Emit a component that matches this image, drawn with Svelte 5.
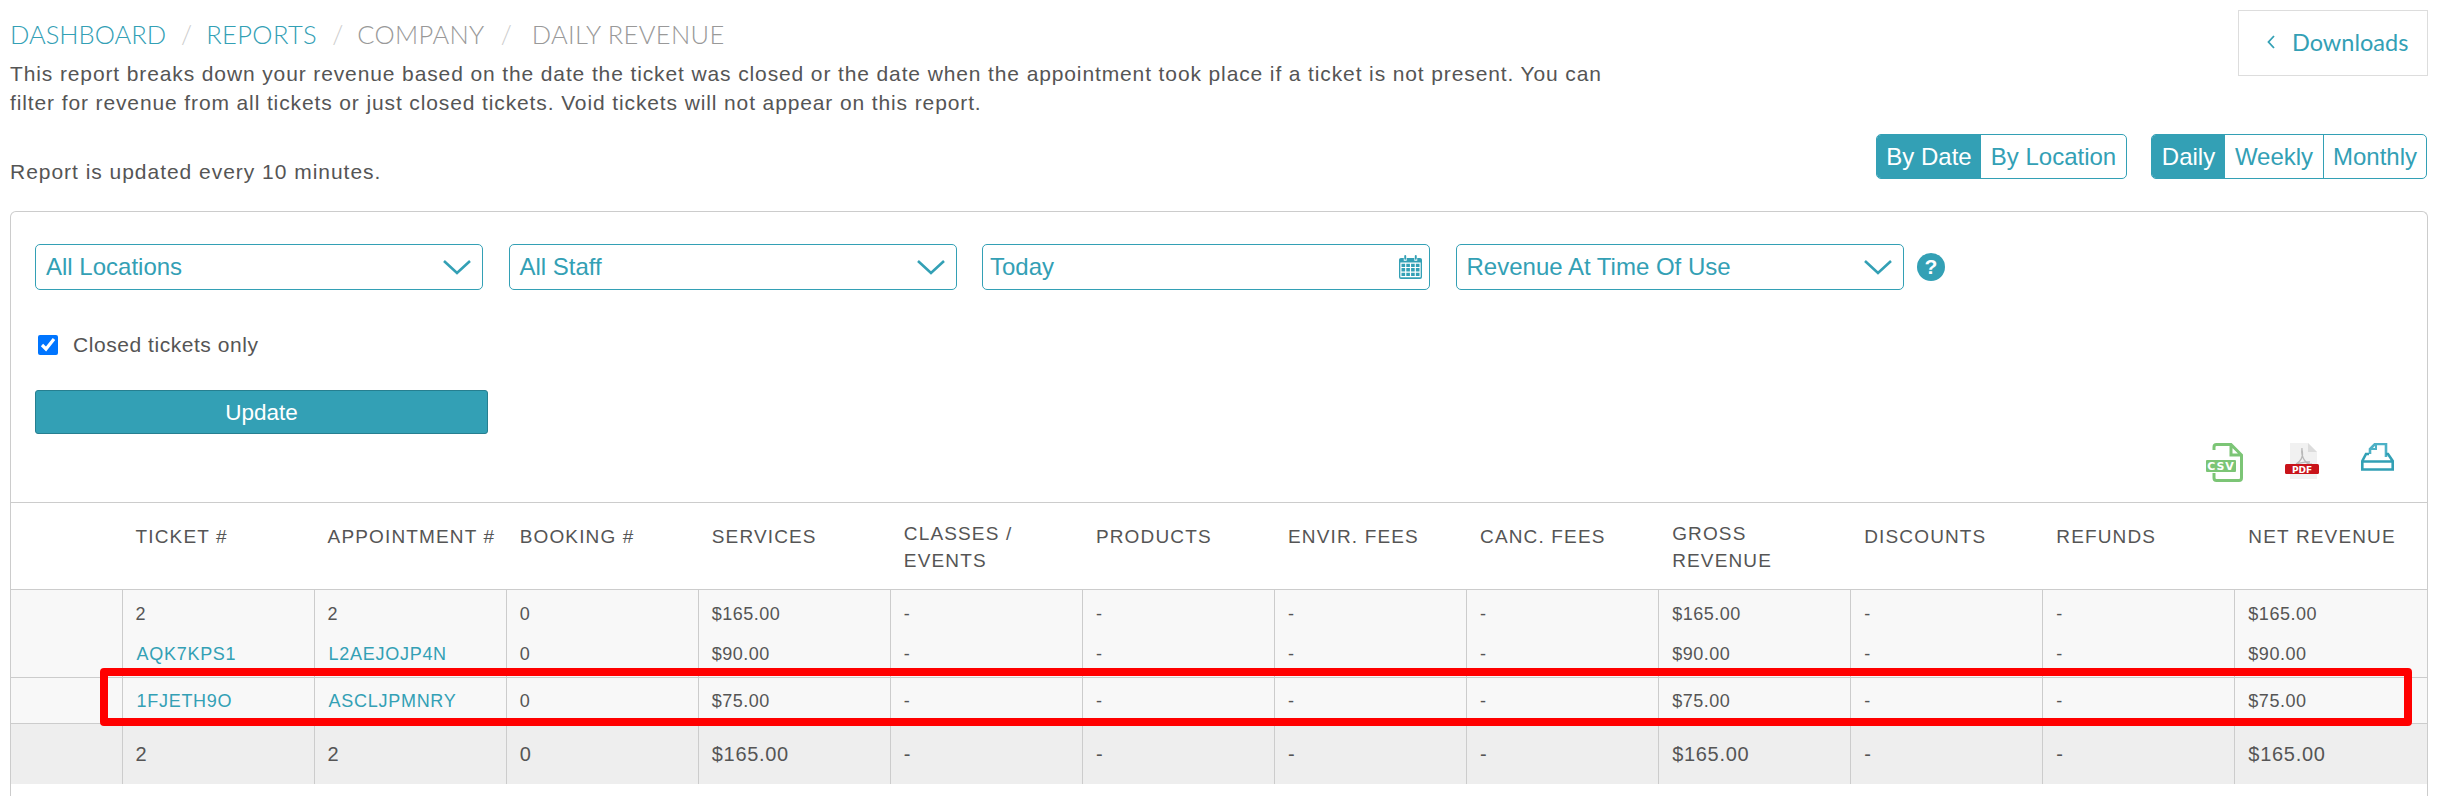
<script>
  const heads = [['TICKET #'],['APPOINTMENT #'],['BOOKING #'],['SERVICES'],['CLASSES /','EVENTS'],['PRODUCTS'],['ENVIR. FEES'],['CANC. FEES'],['GROSS','REVENUE'],['DISCOUNTS'],['REFUNDS'],['NET REVENUE']];
  const rows = [
    { cls: 'r1', link: false, cells: ['2','2','0','$165.00','-','-','-','-','$165.00','-','-','$165.00'] },
    { cls: 'r2', link: true, cells: ['AQK7KPS1','L2AEJOJP4N','0','$90.00','-','-','-','-','$90.00','-','-','$90.00'] },
    { cls: 'r3', link: true, cells: ['1FJETH9O','ASCLJPMNRY','0','$75.00','-','-','-','-','$75.00','-','-','$75.00'] },
    { cls: 'total', link: false, cells: ['2','2','0','$165.00','-','-','-','-','$165.00','-','-','$165.00'] }
  ];
</script>

{#snippet chevron()}
  <svg class="chev" viewBox="0 0 30 16" width="30" height="16"><path d="M2 2 L15 14 L28 2" fill="none" stroke="#33a0b5" stroke-width="2.6"/></svg>
{/snippet}

<div class="page">
  <header class="top">
    <nav class="crumbs">
      <a href="#d">DASHBOARD</a><i>/</i><a href="#r">REPORTS</a><i>/</i><span>COMPANY</span><i>/</i><span class="last">DAILY REVENUE</span>
    </nav>
    <a class="downloads" href="#dl">
      <svg viewBox="0 0 10 16" width="10" height="16"><path d="M8 2 L2.5 8 L8 14" fill="none" stroke="#33a0b5" stroke-width="1.8"/></svg>
      <span>Downloads</span>
    </a>
  </header>

  <p class="desc">This report breaks down your revenue based on the date the ticket was closed or the date when the appointment took place if a ticket is not present. You can<br/>filter for revenue from all tickets or just closed tickets. Void tickets will not appear on this report.</p>

  <div class="subbar">
    <p class="updated">Report is updated every 10 minutes.</p>
    <div class="toggles">
      <div class="seg first"><b class="on w105">By Date</b><b class="w146">By Location</b></div>
      <div class="seg"><b class="on w74">Daily</b><b class="w98 sep">Weekly</b><b class="w103">Monthly</b></div>
    </div>
  </div>

  <section class="card">
    <div class="filters">
      <div class="field">All Locations {@render chevron()}</div>
      <div class="field">All Staff {@render chevron()}</div>
      <div class="field today">Today
        <svg viewBox="0 0 24 25" width="23" height="24"><path fill="#33a0b5" d="M2 3h3v3h3V3h8v3h3V3h3a2 2 0 0 1 2 2v18a2 2 0 0 1-2 2H2a2 2 0 0 1-2-2V5a2 2 0 0 1 2-2z"/><rect x="5.5" y="0" width="2" height="5" rx="1" fill="#33a0b5"/><rect x="16.5" y="0" width="2" height="5" rx="1" fill="#33a0b5"/><path stroke="#fff" stroke-width="1.2" fill="none" d="M2 8.5h20v14H2zM2 13h20M2 17.8h20M7 8.5v14M12 8.5v14M17 8.5v14"/></svg>
      </div>
      <div class="field">Revenue At Time Of Use {@render chevron()}</div>
      <span class="help">?</span>
    </div>
    <label class="check"><input type="checkbox" checked /> <span>Closed tickets only</span></label>
    <button class="update">Update</button>

    <div class="exports">
      <svg viewBox="0 0 37 39" width="37" height="39">
        <path d="M8 7V4a2.5 2.5 0 0 1 2.5-2.5H25L35.5 12v23a2.5 2.5 0 0 1-2.5 2.5H10.500A2.500 2.500 0 0 1 8 35v-5M25 2v10h10" fill="none" stroke="#7cc576" stroke-width="3"/>
        <rect x="0" y="17" width="30" height="12" rx="1" fill="#7cc576"/>
        <text x="15" y="27" text-anchor="middle" fill="#fff" class="csv">CSV</text>
      </svg>
      <svg viewBox="0 0 34 36" width="34" height="36">
        <path d="M5 0h18l9 9v27H5z" fill="#f1f1f1"/>
        <path d="M23 0l9 9h-9z" fill="#dcdcdc"/>
        <path d="M17 5c-1 6 0 9 3 13s6 3 7 3M17 7c2 7-2 12-6 14M11 21c4-1 9-3 14-2" fill="none" stroke="#b9b9b9" stroke-width="1.300"/>
        <rect x="0" y="21" width="34" height="10" rx="1.500" fill="#c9141a"/>
        <text x="17" y="30" text-anchor="middle" fill="#fff" class="pdf">PDF</text>
      </svg>
      <svg viewBox="0 0 33 28" width="33" height="28">
        <path d="M9 11V6l5-5h11v13" fill="none" stroke="#4db1c6" stroke-width="2.600"/>
        <path d="M9 6h6V1" fill="none" stroke="#4db1c6" stroke-width="2"/>
        <path d="M8 11H5L1.300 18v8.500h30.400V18L27 11h-2M1.300 18.500h30.400" fill="none" stroke="#33a0b5" stroke-width="2.600"/>
      </svg>
    </div>

    <table>
      <colgroup><col class="c0" />{#each heads as _}<col class="cn" />{/each}</colgroup>
      <thead>
        <tr><th></th>{#each heads as h}<th class:two={h.length > 1}>{#each h as l, i}{#if i}<br/>{/if}{l}{/each}</th>{/each}</tr>
      </thead>
      <tbody>
        {#each rows as r}
          <tr class={r.cls}><td></td>{#each r.cells as c, i}<td class:link={r.link && i < 2}>{c}</td>{/each}</tr>
        {/each}
      </tbody>
    </table>
  </section>
  <div class="highlight"></div>
</div>

<style>
  :global(body) { margin: 0; background: #fff; }
  .page { position: relative; height: 796px; overflow: hidden; box-sizing: border-box; padding: 10px 10px 0 10px; font-family: "Liberation Sans", Arial, sans-serif; color: #555; }
  p { margin: 0; }
  a { text-decoration: none; color: #33a0b5; }
  .top { display: flex; justify-content: space-between; align-items: flex-start; height: 50px; }
  .crumbs { font-family: Lato, sans-serif; font-weight: 300; font-size: 25.500px; color: #999; padding-top: 10px; line-height: 28px; white-space: nowrap; display: flex; }
  .crumbs i { font-style: normal; color: #ccc; margin: 0 14px 0 15px; }
  .crumbs span { letter-spacing: 0.35px; }
  .crumbs i + a { letter-spacing: 0.4px; }
  .crumbs a + i { margin-right: 14px; }
  .crumbs span + i { margin-left: 16px; }
  .crumbs .last { margin-left: 6px; }
  .downloads { box-sizing: border-box; width: 190px; height: 66px; border: 1px solid #ddd; display: flex; align-items: center; gap: 16px; padding-left: 27px; padding-bottom: 2px; font-family: Lato, sans-serif; font-size: 23.500px; }
  .desc { font-size: 21px; line-height: 28.500px; letter-spacing: 0.88px; color: #555; }
  .subbar { display: flex; justify-content: space-between; height: 95px; padding-right: 1px; }
  .updated { font-size: 21px; letter-spacing: 0.97px; line-height: 24px; padding-top: 43px; }
  .toggles { display: flex; gap: 24px; padding-top: 17px; }
  .seg { display: flex; height: 45px; box-sizing: border-box; border: 1px solid #33a0b5; border-radius: 5px; overflow: hidden; }
  .seg b { font-weight: 400; font-size: 24px; line-height: 43px; color: #33a0b5; text-align: center; box-sizing: border-box; }
  .seg b.on { background: #33a0b5; color: #fff; }
  .seg .sep { border-right: 1px solid #33a0b5; }
  .w105 { width: 104px; } .w146 { width: 145px; } .w74 { width: 73px; } .w98 { width: 99px; } .w103 { width: 102px; }
  .card { box-sizing: border-box; height: 620px; border: 1px solid #ccc; border-bottom: 0; border-radius: 6px 6px 0 0; padding-top: 32px; margin-top: -1px; }
  .filters { display: flex; align-items: center; gap: 25.500px; padding-left: 24px; height: 46px; }
  .field { box-sizing: border-box; width: 448px; height: 46px; border: 1px solid #33a0b5; border-radius: 5px; display: flex; align-items: center; justify-content: space-between; padding: 0 10px; font-size: 24px; color: #33a0b5; }
  .today { padding: 0 7px 0 7px; }
  .help { margin-left: -12px; width: 28px; height: 28px; border-radius: 50%; background: #33a0b5; color: #fff; font-weight: 700; font-size: 21px; line-height: 28px; text-align: center; }
  .check { display: flex; align-items: center; margin: 40px 0 0 27px; height: 30px; font-size: 21px; color: #555; letter-spacing: 0.55px; }
  .check input { width: 20px; height: 20px; margin: 0 15px 0 0; accent-color: #0075ff; }
  .update { display: block; box-sizing: border-box; margin: 30px 0 0 24px; padding: 2px 0 0; width: 453px; height: 44px; background: #33a0b5; border: 1px solid #267f90; border-radius: 3px; color: #fff; font-family: inherit; font-size: 22.500px; }
  .exports { height: 68px; display: flex; justify-content: flex-end; align-items: flex-start; gap: 42px; padding: 9px 33px 0 0; box-sizing: border-box; }
  table { width: 100%; table-layout: fixed; border-collapse: collapse; }
  .c0 { width: 111px; }
  th { height: 87px; box-sizing: border-box; vertical-align: top; text-align: left; font-weight: 400; font-size: 19px; letter-spacing: 1.15px; padding: 22px 0 0 13.500px; line-height: 24px; color: #555; border-top: 1px solid #ccc; border-bottom: 1px solid #ccc; }
  th.two { padding-top: 17px; line-height: 27px; }
  td { box-sizing: border-box; vertical-align: top; padding: 0 0 0 13px; font-size: 18px; line-height: 20px; letter-spacing: 0.5px; border-left: 1px solid #ccc; background: #f8f8f8; color: #555; }
  td:first-child { border-left: 0; }
  td.link { color: #33a0b5; letter-spacing: 0.72px; padding-left: 14px; }
  .r1 td { height: 44px; padding-top: 14px; }
  .r2 td { height: 44px; padding-top: 10px; border-bottom: 1px solid #ccc; }
  .r3 td { height: 46px; padding-top: 13px; border-bottom: 1px solid #ccc; }
  .total td { height: 60px; padding-top: 20px; font-size: 20px; letter-spacing: 0.7px; background: #eee; }
  .highlight { position: absolute; left: 100px; top: 668px; width: 2312px; height: 58px; box-sizing: border-box; border: 8px solid #f00; border-radius: 4px; pointer-events: none; }
  .csv { font: 700 11px "DejaVu Sans", sans-serif; letter-spacing: 1px; }
  .pdf { font: 700 9px "DejaVu Sans", sans-serif; }
</style>
